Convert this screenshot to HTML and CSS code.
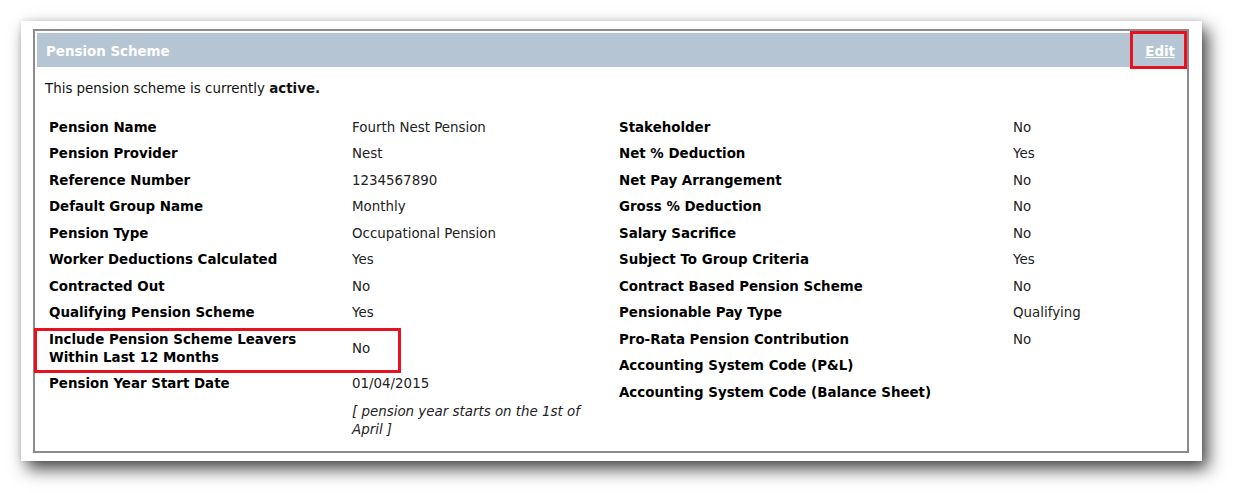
FILE: index.html
```html
<!DOCTYPE html>
<html>
<head>
<meta charset="utf-8">
<link rel="stylesheet" href="styles.css">
</head>
<body>
<div class="card">
  <div class="panel">
    <div class="panel-head">
      <span class="panel-title">Pension Scheme</span>
      <a class="edit" href="#">Edit</a>
    </div>
    <p class="intro">This pension scheme is currently <b>active.</b></p>
    <div class="columns">
      <div class="col col-left">
        <div class="row"><span class="label">Pension Name</span><span class="value">Fourth Nest Pension</span></div>
        <div class="row"><span class="label">Pension Provider</span><span class="value">Nest</span></div>
        <div class="row"><span class="label">Reference Number</span><span class="value">1234567890</span></div>
        <div class="row"><span class="label">Default Group Name</span><span class="value">Monthly</span></div>
        <div class="row"><span class="label">Pension Type</span><span class="value">Occupational Pension</span></div>
        <div class="row"><span class="label">Worker Deductions Calculated</span><span class="value">Yes</span></div>
        <div class="row"><span class="label">Contracted Out</span><span class="value">No</span></div>
        <div class="row"><span class="label">Qualifying Pension Scheme</span><span class="value">Yes</span></div>
        <div class="row highlight"><span class="label">Include Pension Scheme Leavers<br>Within Last 12 Months</span><span class="value mid">No</span></div>
        <div class="row"><span class="label">Pension Year Start Date</span><span class="value">01/04/2015</span></div>
        <div class="row"><span class="label"></span><span class="value note">[ pension year starts on the 1st of<br>April ]</span></div>
      </div>
      <div class="col col-right">
        <div class="row"><span class="label">Stakeholder</span><span class="value">No</span></div>
        <div class="row"><span class="label">Net % Deduction</span><span class="value">Yes</span></div>
        <div class="row"><span class="label">Net Pay Arrangement</span><span class="value">No</span></div>
        <div class="row"><span class="label">Gross % Deduction</span><span class="value">No</span></div>
        <div class="row"><span class="label">Salary Sacrifice</span><span class="value">No</span></div>
        <div class="row"><span class="label">Subject To Group Criteria</span><span class="value">Yes</span></div>
        <div class="row"><span class="label">Contract Based Pension Scheme</span><span class="value">No</span></div>
        <div class="row"><span class="label">Pensionable Pay Type</span><span class="value">Qualifying</span></div>
        <div class="row"><span class="label">Pro-Rata Pension Contribution</span><span class="value">No</span></div>
        <div class="row"><span class="label">Accounting System Code (P&amp;L)</span><span class="value"></span></div>
        <div class="row"><span class="label">Accounting System Code (Balance Sheet)</span><span class="value"></span></div>
      </div>
    </div>
  </div>
</div>
</body>
</html>
```

FILE: styles.css
```css
html {
  margin: 0;
  padding: 0;
  height: 100%;
  background: #ffffff;
}
body {
  margin: 0;
  min-height: 100%;
  box-sizing: border-box;
  padding: 21px 0 0 21px;
  font-family: "DejaVu Sans", "Liberation Sans", sans-serif;
  font-size: 13.4px;
  color: #111;
}
.card {
  width: 1181px;
  height: 440px;
  box-sizing: border-box;
  background: #fff;
  padding: 8px 13px 0 12px;
  box-shadow: 0 0 5px rgba(0,0,0,0.12), 6px 8px 16px rgba(0,0,0,0.72);
}
.panel {
  border: 2px solid #8c8c8c;
  padding: 2px;
  height: 424px;
  box-sizing: border-box;
  position: relative;
}
.panel-head {
  height: 34px;
  background: #b5c5d3;
  display: flex;
  align-items: center;
  justify-content: space-between;
  padding: 2px 10px 0 9px;
  box-sizing: border-box;
  color: #fff;
  font-weight: bold;
}
.panel-title {
  color: #fff;
}
.edit {
  color: #fff;
  text-decoration: underline;
  position: relative;
}
.edit::after {
  content: "";
  position: absolute;
  left: -15px;
  right: -12px;
  top: -13px;
  bottom: -10px;
  border: 3px solid #e8121e;
}
.intro {
  margin: 13px 0 0 8px;
  line-height: 18px;
}
.columns {
  display: flex;
  margin-top: 16.6px;
  padding-left: 12px;
}
.col-left {
  width: 570px;
}
.col-right {
  flex: 1;
}
.row {
  display: flex;
  line-height: 18px;
  padding: 4.4px 0 4.1px;
}
.col-left .label {
  width: 303px;
  flex: none;
  font-weight: bold;
  color: #000;
}
.col-right .label {
  width: 394px;
  flex: none;
  font-weight: bold;
  color: #000;
}
.value {
  color: #222;
}
.value.mid {
  align-self: center;
}
.note {
  font-style: italic;
  padding-top: 1px;
}
.highlight {
  position: relative;
}
.highlight::after {
  content: "";
  position: absolute;
  left: -15px;
  width: 367px;
  top: 2px;
  bottom: -2px;
  box-sizing: border-box;
  border: 3px solid #e8121e;
}
```
